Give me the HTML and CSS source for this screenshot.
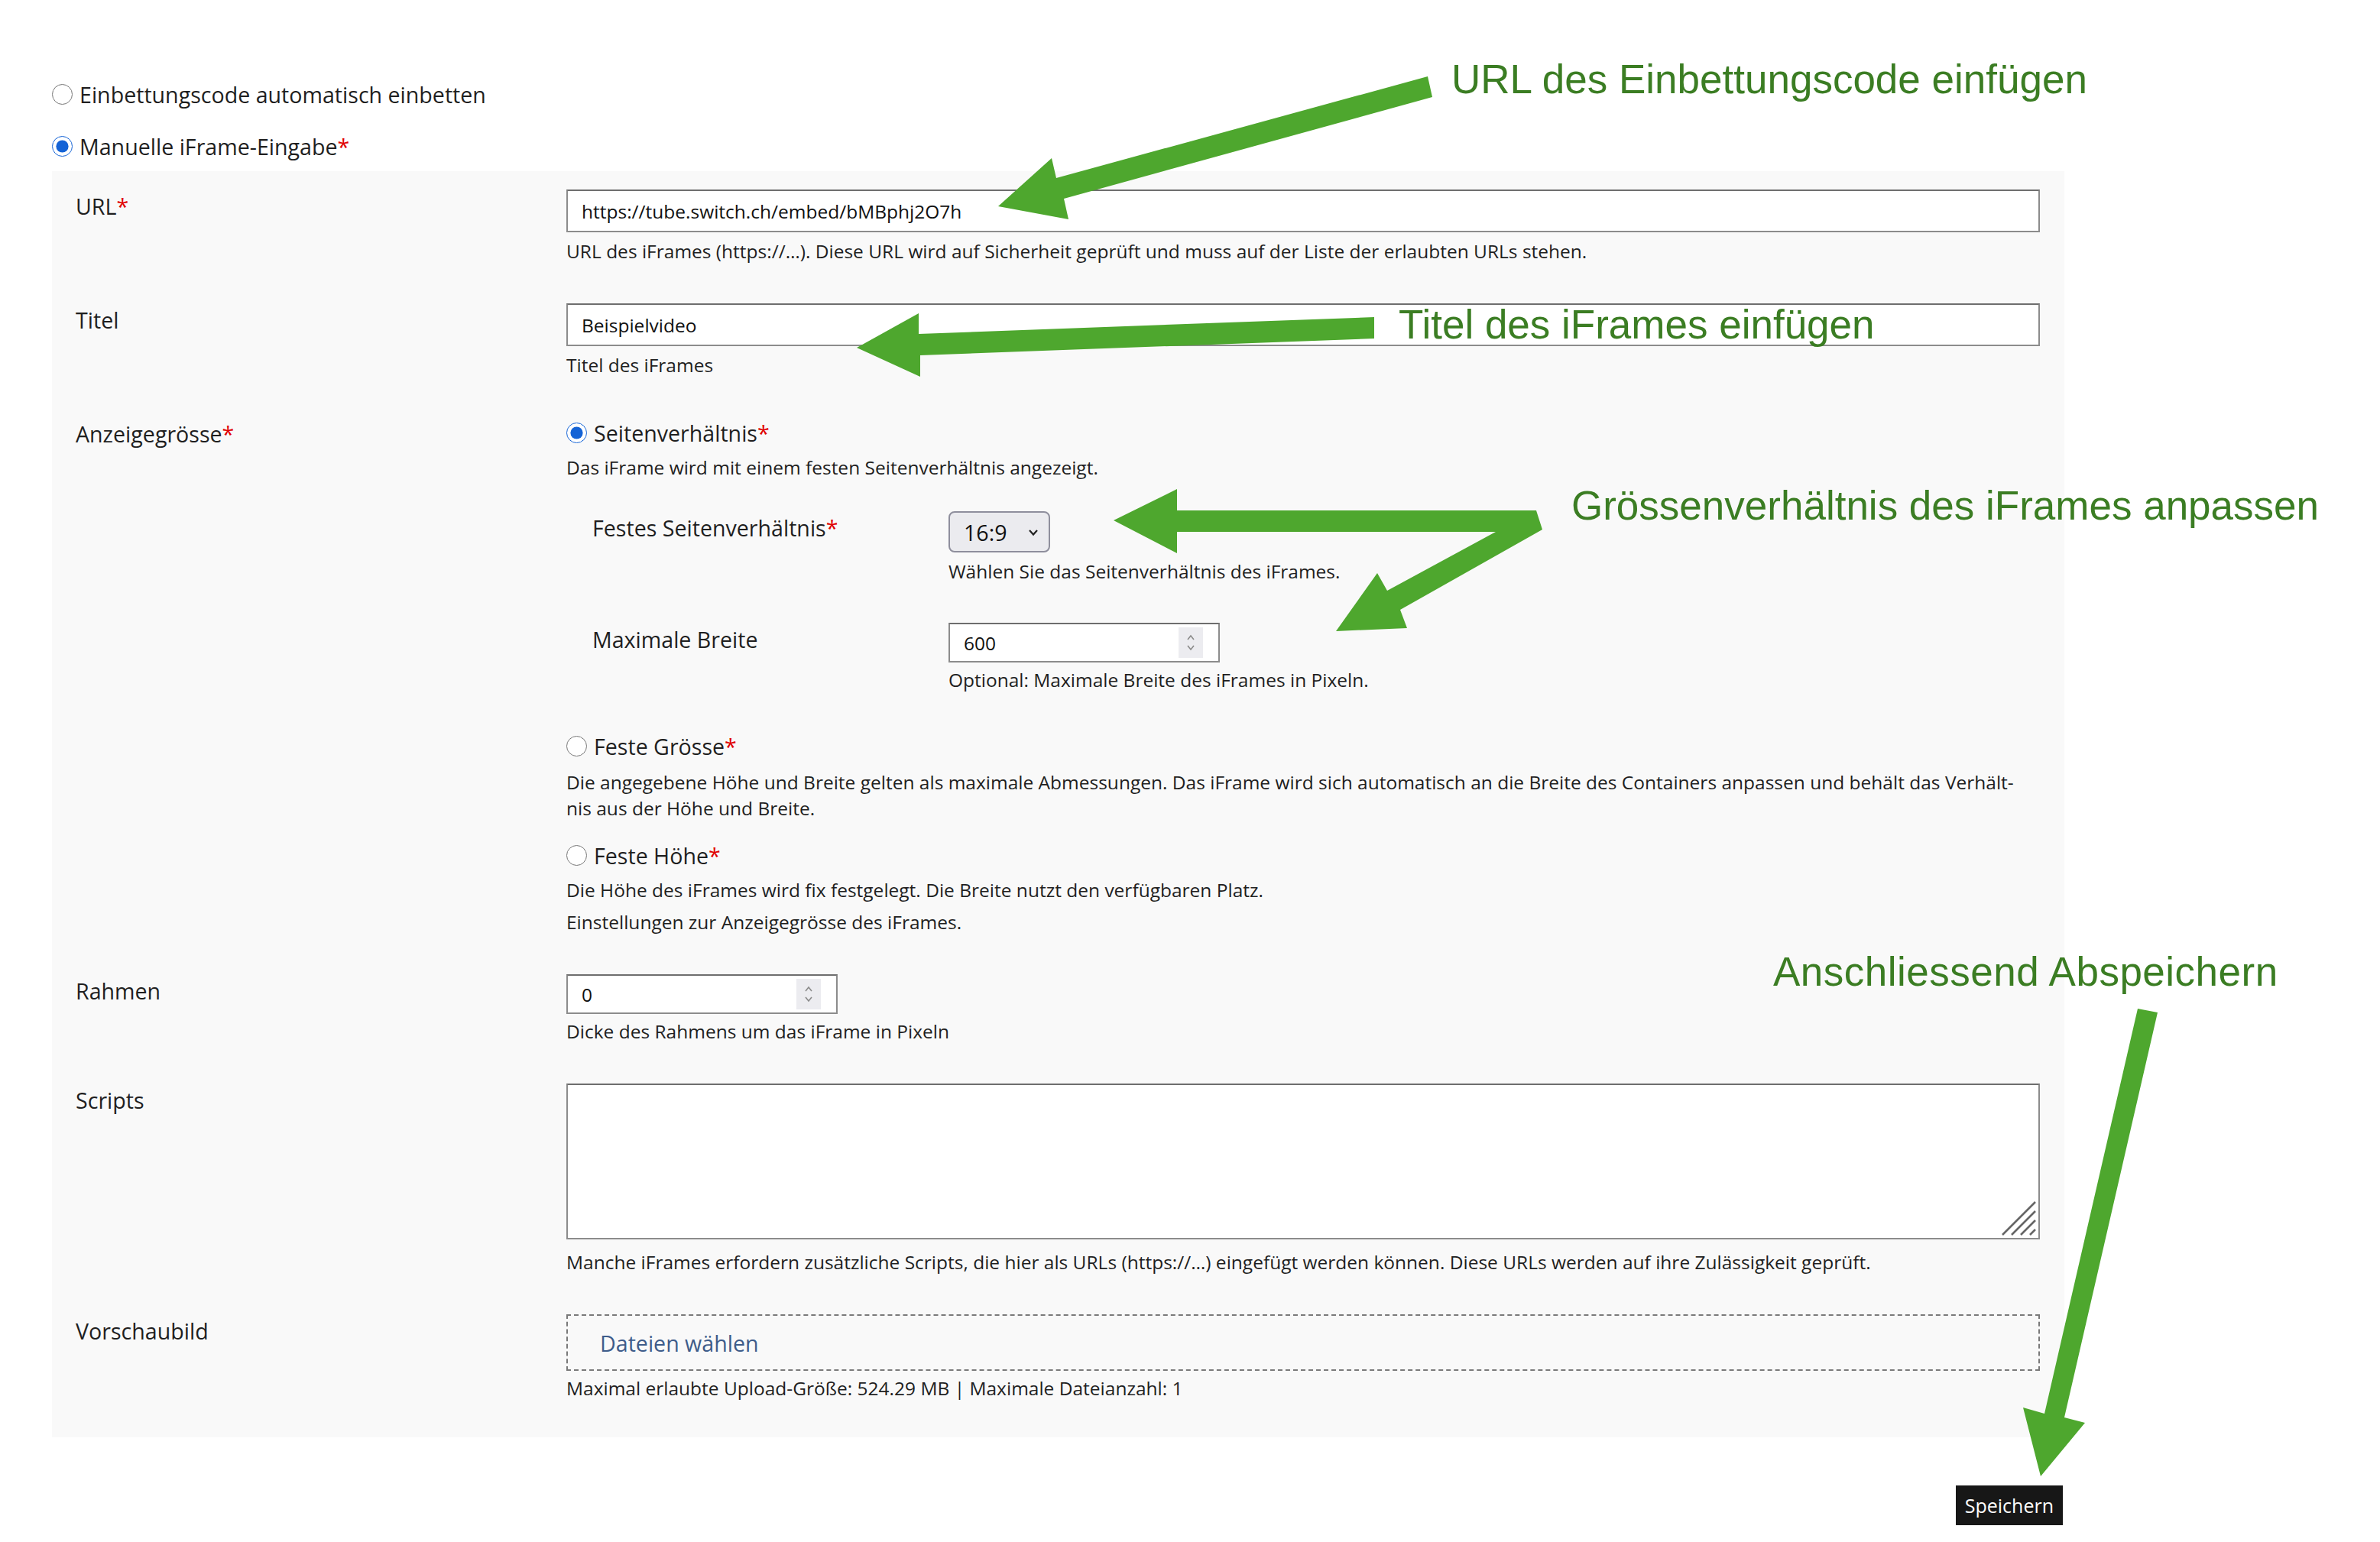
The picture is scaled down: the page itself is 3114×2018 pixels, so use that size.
FILE: index.html
```html
<!DOCTYPE html>
<html lang="de">
<head>
    <meta charset="UTF-8">
    <meta name="viewport" content="width=device-width, initial-scale=1.0">
    <title>iFrame einbetten</title>
    <link rel="stylesheet" href="styles.css">
</head>
<body>

    <div class="page">
        <div class="mode-list">
            <label class="choice"><input type="radio" name="mode"> Einbettungscode automatisch einbetten</label>
            <label class="choice"><input type="radio" name="mode" checked> Manuelle iFrame-Eingabe<span class="req">*</span></label>
        </div>

        <div class="panel">
            <div class="row">
                <div class="row-label">URL<span class="req">*</span></div>
                <div class="row-field">
                    <input class="text-input" type="text" value="https://tube.switch.ch/embed/bMBphj2O7h">
                    <div class="help">URL des iFrames (https://…). Diese URL wird auf Sicherheit geprüft und muss auf der Liste der erlaubten URLs stehen.</div>
                </div>
            </div>

            <div class="row">
                <div class="row-label">Titel</div>
                <div class="row-field">
                    <input class="text-input" type="text" value="Beispielvideo">
                    <div class="help">Titel des iFrames</div>
                </div>
            </div>

            <div class="row">
                <div class="row-label">Anzeigegrösse<span class="req">*</span></div>
                <div class="row-field">
                    <div class="option option-ratio">
                        <label class="option-line"><input type="radio" name="size" checked> Seitenverhältnis<span class="req">*</span></label>
                        <div class="help help-tight">Das iFrame wird mit einem festen Seitenverhältnis angezeigt.</div>

                        <div class="sub-rows">
                            <div class="sub-row">
                                <div class="row-label">Festes Seitenverhältnis<span class="req">*</span></div>
                                <div class="row-field">
                                    <div class="select">
                                        <select>
                                            <option>16:9</option>
                                            <option>4:3</option>
                                            <option>1:1</option>
                                        </select>
                                        <svg class="select-arrow" width="14" height="10" viewBox="0 0 14 10"><path d="M2 2 L7 7.5 L12 2" fill="none" stroke="#222" stroke-width="2.2"/></svg>
                                    </div>
                                    <div class="help">Wählen Sie das Seitenverhältnis des iFrames.</div>
                                </div>
                            </div>
                            <div class="sub-row">
                                <div class="row-label">Maximale Breite</div>
                                <div class="row-field">
                                    <div class="number">
                                        <input type="number" value="600">
                                        <span class="spin">
                                            <svg width="14" height="28" viewBox="0 0 14 28"><path d="M3 10 L7 5 L11 10 M3 18 L7 23 L11 18" fill="none" stroke="#8a8a8a" stroke-width="1.6"/></svg>
                                        </span>
                                    </div>
                                    <div class="help help-number">Optional: Maximale Breite des iFrames in Pixeln.</div>
                                </div>
                            </div>
                        </div>
                    </div>

                    <div class="option option-fixed">
                        <label class="option-line"><input type="radio" name="size"> Feste Grösse<span class="req">*</span></label>
                        <div class="help help-wide">Die angegebene Höhe und Breite gelten als maximale Abmessungen. Das iFrame wird sich automatisch an die Breite des Containers anpassen und behält das Verhält&shy;nis aus der Höhe und Breite.</div>
                    </div>

                    <div class="option">
                        <label class="option-line"><input type="radio" name="size"> Feste Höhe<span class="req">*</span></label>
                        <div class="help help-tight">Die Höhe des iFrames wird fix festgelegt. Die Breite nutzt den verfügbaren Platz.</div>
                    </div>
                    <div class="help">Einstellungen zur Anzeigegrösse des iFrames.</div>
                </div>
            </div>

            <div class="row">
                <div class="row-label">Rahmen</div>
                <div class="row-field">
                    <div class="number">
                        <input type="number" value="0">
                        <span class="spin">
                            <svg width="14" height="28" viewBox="0 0 14 28"><path d="M3 10 L7 5 L11 10 M3 18 L7 23 L11 18" fill="none" stroke="#8a8a8a" stroke-width="1.6"/></svg>
                        </span>
                    </div>
                    <div class="help help-number">Dicke des Rahmens um das iFrame in Pixeln</div>
                </div>
            </div>

            <div class="row">
                <div class="row-label">Scripts</div>
                <div class="row-field">
                    <div class="textarea-box">
                        <textarea></textarea>
                        <svg class="grip" width="48" height="48" viewBox="0 0 48 48">
                            <path d="M3 46 L46 3 M15 46 L46 15 M27 46 L46 27 M39 46 L46 39" stroke="#666" stroke-width="2.6"/>
                        </svg>
                    </div>
                    <div class="help help-scripts">Manche iFrames erfordern zusätzliche Scripts, die hier als URLs (https://…) eingefügt werden können. Diese URLs werden auf ihre Zulässigkeit geprüft.</div>
                </div>
            </div>

            <div class="row">
                <div class="row-label">Vorschaubild</div>
                <div class="row-field">
                    <div class="dropzone">Dateien wählen</div>
                    <div class="help help-number">Maximal erlaubte Upload-Größe: 524.29 MB | Maximale Dateianzahl: 1</div>
                </div>
            </div>
        </div>

        <div class="actions">
            <button>Speichern</button>
        </div>
    </div>

    <!-- Annotations -->
    <svg class="arrows" width="3114" height="2018" viewBox="0 0 3114 2018">
        <polygon points="1868,100 1874,127 1392,260 1398,287 1306,270 1376,207 1382,233"/>
        <polygon points="1798,415 1798,443 1204,465 1204,493 1121,455 1202,410 1202,437"/>
        <polygon points="1457,681 1540,640 1540,668 2010,668 2018,693 1832,798 1841,822 1748,826 1802,750 1815,773 1957,696 1540,696 1540,724"/>
        <polygon points="2797,1320 2823,1325 2701,1855 2728,1862 2670,1932 2647,1842 2675,1850"/>
    </svg>

    <div class="note note-url">URL des Einbettungscode einfügen</div>
    <div class="note note-title">Titel des iFrames einfügen</div>
    <div class="note note-ratio">Grössenverhältnis des iFrames anpassen</div>
    <div class="note note-save">Anschliessend Abspeichern</div>

</body>
</html>
```

FILE: styles.css
```css
/* General Styles */
body, html {
    margin: 0;
    padding: 0;
}

body {
    position: relative;
    width: 3114px;
    height: 2018px;
    overflow: hidden;
    font-family: "Open Sans", "DejaVu Sans", sans-serif;
    color: #1f1f1f;
    background-color: #ffffff;
}

.page {
    width: 2633px;
    margin-left: 68px;
    padding-top: 103px;
}

.req {
    color: #e00000;
}

input[type="radio"] {
    width: 27px;
    height: 27px;
    margin: 0 9px 0 0;
    accent-color: #1463d6;
}

/* Mode selection */
.choice {
    display: flex;
    align-items: center;
    height: 40px;
    font-size: 28.6px;
    margin-bottom: 28px;
}

.choice:last-child {
    margin-bottom: 13px;
}

/* Form panel */
.panel {
    background-color: #f9f9f9;
    padding: 24px 32px 47px 31px;
}

.row {
    display: grid;
    grid-template-columns: 642px 1fr;
    margin-bottom: 51px;
}

.row:last-child {
    margin-bottom: 0;
}

.row-label {
    font-size: 28.6px;
    line-height: 40px;
    padding-top: 2px;
}

.help {
    font-size: 24.5px;
    line-height: 34px;
    margin-top: 8px;
}

.help-tight {
    margin-top: 9px;
}

.help-number {
    margin-top: 6px;
}

.help-wide {
    max-width: 1912px;
    margin-top: 11px;
}

.help-scripts {
    margin-top: 13px;
}

.text-input {
    display: block;
    box-sizing: border-box;
    width: 100%;
    height: 56px;
    border: 2px solid #8c8c8c;
    border-top-color: #6e6e6e;
    background: #ffffff;
    padding: 0 18px;
    font-family: "Open Sans", sans-serif;
    font-size: 24.5px;
    color: #111;
}

/* Size options */
.option-line {
    display: flex;
    align-items: center;
    height: 40px;
    font-size: 28.6px;
}

.option-ratio {
    margin-bottom: 49px;
}

.option-fixed {
    margin-bottom: 24px;
}

.sub-rows {
    padding-left: 34px;
    margin-top: 40px;
}

.sub-row {
    display: grid;
    grid-template-columns: 466px 1fr;
    margin-bottom: 50px;
}

.sub-row:last-child {
    margin-bottom: 0;
}

/* Select */
.select {
    position: relative;
    display: inline-block;
}

.select select {
    display: block;
    appearance: none;
    -webkit-appearance: none;
    width: 133px;
    height: 54px;
    border: 2px solid #8f8f9d;
    border-radius: 8px;
    background-color: #ebebef;
    padding: 0 0 0 18px;
    font-family: "Open Sans", sans-serif;
    font-size: 28.6px;
    color: #111;
}

.select-arrow {
    position: absolute;
    right: 15px;
    top: 23px;
    pointer-events: none;
}

/* Number inputs */
.number {
    display: flex;
    align-items: center;
    box-sizing: border-box;
    width: 355px;
    height: 52px;
    border: 2px solid #8c8c8c;
    border-top-color: #6e6e6e;
    background: #ffffff;
    padding: 0 20px 0 18px;
}

.number input {
    flex: 1;
    min-width: 0;
    border: none;
    outline: none;
    padding: 0;
    background: transparent;
    font-family: "Open Sans", sans-serif;
    font-size: 24.5px;
    color: #111;
    -moz-appearance: textfield;
}

.number input::-webkit-inner-spin-button,
.number input::-webkit-outer-spin-button {
    -webkit-appearance: none;
    margin: 0;
}

.spin {
    display: flex;
    align-items: center;
    justify-content: center;
    width: 32px;
    height: 40px;
    background-color: #ececf0;
}

/* Textarea */
.textarea-box {
    position: relative;
}

.textarea-box textarea {
    display: block;
    box-sizing: border-box;
    width: 100%;
    height: 204px;
    border: 2px solid #8c8c8c;
    border-top-color: #6e6e6e;
    background: #ffffff;
    resize: none;
}

.grip {
    position: absolute;
    right: 4px;
    bottom: 4px;
}

/* File upload */
.dropzone {
    display: flex;
    align-items: center;
    box-sizing: border-box;
    height: 74px;
    border: 2px dashed #7a7a7a;
    padding-left: 42px;
    font-size: 28.6px;
    color: #3e5c8a;
}

/* Button styles */
.actions {
    display: flex;
    justify-content: flex-end;
    margin-top: 63px;
    padding-right: 2px;
}

.actions button {
    height: 52px;
    padding: 0 12px;
    border: none;
    border-radius: 0;
    background-color: #171717;
    color: #ffffff;
    font-family: "Open Sans", sans-serif;
    font-size: 25px;
    cursor: pointer;
}

/* Annotations */
.arrows {
    position: absolute;
    top: 0;
    left: 0;
    pointer-events: none;
}

.arrows polygon {
    fill: #4ea72e;
}

.note {
    position: absolute;
    font-family: "Liberation Sans", Arial, sans-serif;
    font-size: 53px;
    line-height: 1;
    color: #3b7d23;
    white-space: nowrap;
}

.note-url {
    left: 1899px;
    top: 77px;
}

.note-title {
    left: 1830px;
    top: 398px;
}

.note-ratio {
    left: 2056px;
    top: 635px;
}

.note-save {
    left: 2320px;
    top: 1245px;
    letter-spacing: 0.5px;
}
```
